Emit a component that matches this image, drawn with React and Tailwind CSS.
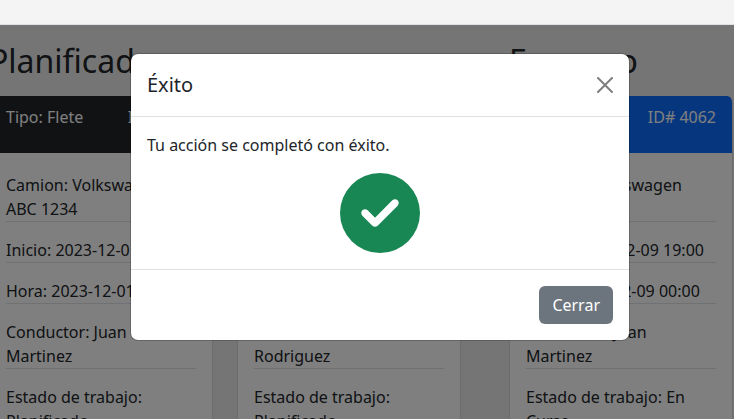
import React from 'react';

const sections = [
  {
    title: 'Planificado',
    headerClass: 'bg-[#212529]',
    jobs: [
      {
        id: 4060,
        type: 'Flete',
        rows: [
          'Camion: Volkswagen ABC 1234',
          'Inicio: 2023-12-01 19:00',
          'Hora: 2023-12-01 00:00',
          'Conductor: Juan Martinez',
          'Estado de trabajo: Planificado',
        ],
      },
      {
        id: 4061,
        type: 'Flete',
        rows: [
          'Camion: Volkswagen ABC 1234',
          'Inicio: 2023-12-05 19:00',
          'Hora: 2023-12-05 00:00',
          'Conductor: Carlos Rodriguez',
          'Estado de trabajo: Planificado',
        ],
      },
    ],
  },
  {
    title: 'En curso',
    headerClass: 'bg-[#0d6efd]',
    jobs: [
      {
        id: 4062,
        type: 'Flete',
        rows: [
          'Camion: Volkswagen ABC 1234',
          'Inicio: 2023-12-09 19:00',
          'Hora: 2023-12-09 00:00',
          'Conductor: Juan Martinez',
          'Estado de trabajo: En Curso',
        ],
      },
    ],
  },
];

function JobCard({ job, headerClass }) {
  return (
    <article className="w-56 shrink-0 overflow-hidden rounded-md border border-t-0 border-black/15 bg-white">
      <header className={`flex h-[57px] justify-between px-4 py-[9px] text-white ${headerClass}`}>
        <p>Tipo: {job.type}</p>
        <p>ID# {job.id}</p>
      </header>
      <div className="px-4 pt-5 pb-4">
        {job.rows.map((row) => (
          <p key={row} className="mb-4 border-b border-[#dee2e6]">
            {row}
          </p>
        ))}
      </div>
    </article>
  );
}

function SuccessDialog() {
  return (
    <div
      role="dialog"
      aria-modal="true"
      aria-labelledby="dialog-title"
      className="mx-auto my-7 max-w-[500px] rounded-lg border border-black/20 bg-white bg-clip-padding"
    >
      <div className="flex items-center justify-between border-b border-[#dee2e6] p-4">
        <h5 id="dialog-title" className="text-xl leading-[30px]">
          Éxito
        </h5>
        <button type="button" aria-label="Close" className="text-black/50">
          <svg viewBox="0 0 16 16" className="size-4" fill="currentColor">
            <path d="M.293.293a1 1 0 0 1 1.414 0L8 6.586 14.293.293a1 1 0 1 1 1.414 1.414L9.414 8l6.293 6.293a1 1 0 0 1-1.414 1.414L8 9.414l-6.293 6.293a1 1 0 0 1-1.414-1.414L6.586 8 .293 1.707a1 1 0 0 1 0-1.414z" />
          </svg>
        </button>
      </div>
      <div className="p-4">
        <p className="mb-4">Tu acción se completó con éxito.</p>
        <svg viewBox="0 0 512 512" className="mx-auto size-20" fill="#198754" aria-hidden="true">
          <path d="M256 512A256 256 0 1 0 256 0a256 256 0 1 0 0 512zM369 209L241 337c-9.400 9.400-24.600 9.400-33.900 0l-64-64c-9.400-9.400-9.400-24.600 0-33.900s24.600-9.400 33.900 0l47 47L335 175c9.400-9.400 24.600-9.400 33.900 0s9.400 24.600 0 33.900z" />
        </svg>
      </div>
      <div className="flex justify-end border-t border-[#dee2e6] p-4">
        <button type="button" className="rounded-md bg-[#6c757d] px-[13px] py-[7px] text-white">
          Cerrar
        </button>
      </div>
    </div>
  );
}

export default function App() {
  return (
    <div className="flex h-screen flex-col overflow-hidden font-['Noto_Sans',sans-serif] text-base text-[#212529]">
      <div className="h-[25px] shrink-0 border-b border-[#dee2e6] bg-[#f4f4f4]" />
      <main className="relative flex-1 overflow-hidden bg-[#ebebeb]">
        <div className="-ml-[11px] flex gap-12 pt-4">
          {sections.map((section) => (
            <section key={section.title} className="shrink-0">
              <h2 className="mb-4 text-[32px] leading-[39px]">{section.title}</h2>
              <div className="flex gap-6">
                {section.jobs.map((job) => (
                  <JobCard key={job.id} job={job} headerClass={section.headerClass} />
                ))}
              </div>
            </section>
          ))}
        </div>
        <div className="absolute inset-0 overflow-hidden bg-black/50 pl-[26px]">
          <SuccessDialog />
        </div>
      </main>
    </div>
  );
}
